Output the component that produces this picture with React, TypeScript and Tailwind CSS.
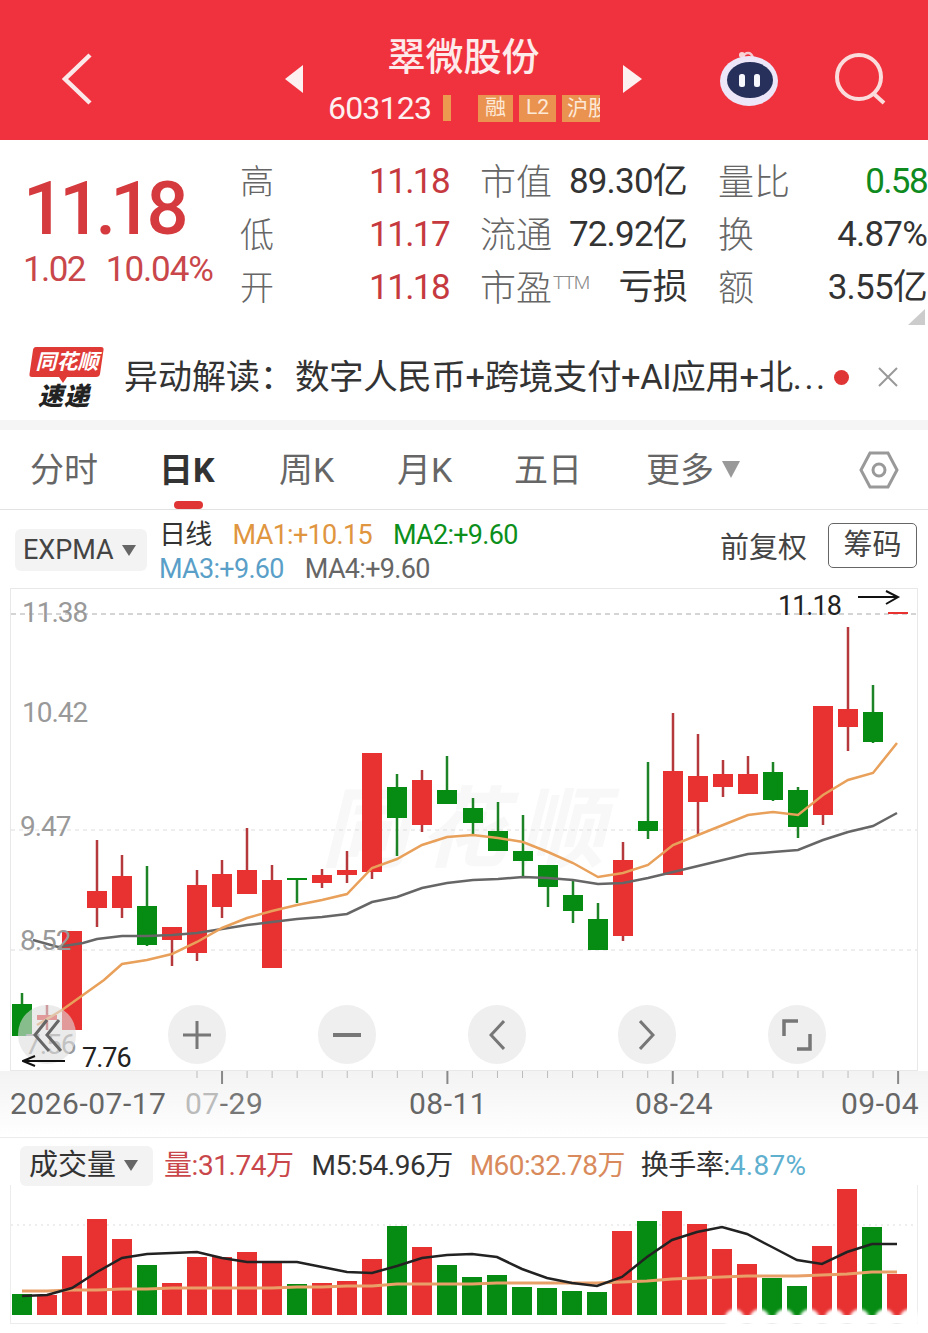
const candles = [
  // x, wick top, body top, body bottom, wick bottom, up
  [22, 993, 1004, 1036, 1036, 0],
  [47, 1005, 1015, 1020, 1030, 1],
  [72, 931, 931, 1030, 1030, 1],
  [97, 840, 891, 908, 927, 1],
  [122, 855, 876, 908, 918, 1],
  [147, 866, 906, 945, 946, 0],
  [172, 927, 927, 940, 966, 1],
  [197, 870, 885, 953, 961, 1],
  [222, 860, 874, 907, 918, 1],
  [247, 828, 870, 894, 894, 1],
  [272, 865, 880, 968, 968, 1],
  [297, 878, 878, 880, 903, 0],
  [322, 869, 875, 883, 888, 1],
  [347, 851, 870, 875, 883, 1],
  [372, 753, 753, 872, 879, 1],
  [397, 774, 787, 818, 856, 0],
  [422, 770, 780, 825, 832, 1],
  [447, 756, 790, 804, 804, 0],
  [473, 798, 808, 823, 835, 0],
  [498, 802, 831, 851, 851, 0],
  [523, 815, 851, 861, 877, 0],
  [548, 865, 865, 887, 907, 0],
  [573, 881, 895, 911, 923, 0],
  [598, 903, 919, 950, 950, 0],
  [623, 842, 860, 936, 941, 1],
  [648, 762, 821, 831, 839, 0],
  [673, 713, 771, 875, 875, 1],
  [698, 734, 776, 802, 835, 1],
  [723, 760, 774, 787, 797, 1],
  [748, 756, 774, 794, 794, 1],
  [773, 762, 772, 800, 801, 0],
  [798, 787, 790, 827, 838, 0],
  [823, 706, 706, 815, 825, 1],
  [848, 627, 709, 727, 751, 1],
  [873, 685, 712, 742, 743, 0],
  [898, 612, 612, 614, 614, 1],
];

const ma1 = '37,1025 62,1010 104,980 122,964 147,960 172,954 197,942 222,928 247,918 272,911 297,905 322,900 347,894 372,868 397,859 422,845 447,837 473,835 498,838 523,842 548,852 573,863 598,877 623,873 648,865 673,845 698,835 723,825 748,815 773,812 798,815 823,795 848,780 873,773 897,743';
const ma2 = '33,940 58,947 83,943 97,939 122,936 147,936 172,935 197,933 222,929 247,925 272,922 297,919 322,917 347,914 372,902 397,897 422,888 447,883 473,880 498,879 523,877 548,878 573,880 598,884 623,883 648,878 673,872 698,866 723,860 748,854 773,852 798,850 823,840 848,832 873,826 897,813';

const volumes = [
  [1294, 0], [1295, 1], [1256, 1], [1219, 1], [1239, 1], [1265, 0], [1283, 1], [1257, 1], [1257, 1],
  [1252, 1], [1262, 1], [1284, 0], [1283, 1], [1281, 1], [1259, 1], [1226, 0], [1247, 1], [1265, 0],
  [1277, 0], [1275, 0], [1287, 0], [1288, 0], [1291, 0], [1292, 0], [1231, 1], [1221, 0], [1211, 1],
  [1224, 1], [1249, 1], [1264, 1], [1278, 0], [1286, 0], [1246, 1], [1189, 1], [1227, 0], [1274, 1],
];
const m5 = [1296, 1295, 1288, 1272, 1258, 1254, 1253, 1252, 1258, 1262, 1262, 1262, 1267, 1272, 1273, 1266, 1258, 1255, 1254, 1257, 1269, 1278, 1283, 1286, 1277, 1257, 1240, 1232, 1227, 1234, 1247, 1260, 1264, 1252, 1244, 1244];
const m60 = [1291, 1291, 1290, 1290, 1289, 1289, 1288, 1288, 1288, 1288, 1288, 1287, 1287, 1286, 1286, 1284, 1284, 1284, 1284, 1283, 1283, 1283, 1283, 1283, 1282, 1281, 1279, 1278, 1277, 1276, 1276, 1276, 1275, 1274, 1272, 1272];

const linePoints = (ys: number[]) => ys.map((y, i) => `${22 + 25 * i},${y}`).join(' ');

const ticks = Array.from({ length: 29 }, (_, i) => 197 + 25.04 * i);

const statRows = [
  { l: '高', v: '11.18', l2: '市值', v2: '89.30亿', l3: '量比', v3: '0.58', c3: 'text-[#0e8a1e] tracking-[-1.6px]' },
  { l: '低', v: '11.17', l2: '流通', v2: '72.92亿', l3: '换', v3: '4.87%', c3: 'text-[#333] tracking-[-0.8px]' },
  { l: '开', v: '11.18', l2: '市盈', v2: '亏损', l3: '额', v3: '3.55亿', c3: 'text-[#333] tracking-[-0.8px]' },
];

const fontClass = "font-['Roboto','Noto_Sans_CJK_SC',sans-serif]";
const axisLabel = 'absolute text-[28px] leading-[36px] tracking-[-1px] text-[#999]';

function Robot() {
  return (
    <svg width="60" height="58" viewBox="0 0 60 58">
      <path d="M24 8 C26 3 32 2 34 9" fill="none" stroke="#f6c9cf" strokeWidth="2.5" />
      <circle cx="23" cy="6" r="3" fill="#f9d5d8" />
      <ellipse cx="30" cy="32" rx="29" ry="25" fill="#ece6f8" />
      <ellipse cx="31" cy="31" rx="23" ry="18" fill="#27305a" />
      <rect x="20" y="25" width="6" height="13" rx="2.5" fill="#f7f7ff" />
      <rect x="35" y="25" width="6" height="13" rx="2.5" fill="#f7f7ff" />
    </svg>
  );
}

function Logo() {
  return (
    <div className="flex w-[76px] flex-col items-center">
      <div className="relative flex h-[36px] w-[76px] items-center justify-center">
        <svg className="absolute inset-0" width="76" height="40" viewBox="0 0 76 40">
          <path d="M7 1 H72 Q75 1 74.5 4 L71 28 Q70.5 31 67 31 H38 L34 37 L30 31 H3 Q0 31 0.5 28 L4 4 Q4.5 1 7 1 Z" fill="#e03a36" />
        </svg>
        <span className="relative -mt-1 text-[21px] leading-none font-bold italic text-white">同花顺</span>
      </div>
      <span className="mt-[2px] -ml-[6px] text-[25px] leading-none font-black italic tracking-[1px] text-[#222]">速递</span>
    </div>
  );
}

function RoundBtn({ children, bg = 'bg-[#efefef]' }: { children: React.ReactNode; bg?: string }) {
  return (
    <div className={`flex h-[59px] w-[58px] items-center justify-center rounded-full ${bg}`}>
      {children}
    </div>
  );
}

function CandleChart() {
  return (
    <svg className="absolute -top-px -left-px" width="908" height="483" viewBox="10 588 908 483">
      <line x1="11" x2="917" y1="614" y2="614" stroke="#aaa" strokeDasharray="5 4" />
      <line x1="11" x2="917" y1="830" y2="830" stroke="#ddd" strokeDasharray="4 4" />
      <line x1="11" x2="917" y1="950" y2="950" stroke="#ddd" strokeDasharray="4 4" />
      {candles.map(([x, wt, bt, bb, wb, up]) => (
        <g key={x}>
          <line x1={x} x2={x} y1={wt} y2={wb} stroke={up ? '#b5383c' : '#1c8426'} strokeWidth="2.5" />
          <rect x={x - 10} y={bt} width="20" height={bb - bt} fill={up ? '#e83232' : '#068c12'} />
        </g>
      ))}
      <polyline points={ma2} fill="none" stroke="#666" strokeWidth="2.5" />
      <polyline points={ma1} fill="none" stroke="#e8a05a" strokeWidth="2.5" />
      <path d="M858 597 H897 M886 591 L898 597 L886 604" fill="none" stroke="#111" strokeWidth="2" />
    </svg>
  );
}

function VolumeChart() {
  return (
    <svg className="absolute top-0 -left-px" width="908" height="139" viewBox="10 1185 908 139">
      <line x1="11" x2="917" y1="1225" y2="1225" stroke="#ddd" strokeDasharray="2 4" />
      {volumes.map(([top, up], i) => (
        <rect key={i} x={12 + 25 * i} y={top} width="20" height={1315 - top} fill={up ? '#e83232' : '#068c12'} />
      ))}
      <polyline points={linePoints(m60)} fill="none" stroke="#e8a068" strokeWidth="3" />
      <polyline points={linePoints(m5)} fill="none" stroke="#222" strokeWidth="2.5" />
      {/* blurred watermark eats the bar bottoms */}
      <g className="blur-[1.5px]">
        {[734.5, 759.5, 784.5, 809.5, 834.5, 859.5, 884.5, 909.5].map(x => (
          <ellipse key={x} cx={x} cy="1319" rx="10" ry="10" fill="#fff" />
        ))}
      </g>
    </svg>
  );
}

export default function App() {
  return (
    <div className={`flex h-[1333px] w-[928px] flex-col overflow-hidden bg-white ${fontClass}`}>
      {/* top bar */}
      <div className="flex h-[140px] shrink-0 items-center bg-[#f0323e] pt-[18px] pl-[62px]">
        <svg width="30" height="52" viewBox="0 0 30 52">
          <path d="M28 2 L3 26 L28 50" fill="none" stroke="#fbe9e9" strokeWidth="4.5" />
        </svg>
        <svg className="ml-[193px]" width="18" height="28" viewBox="0 0 18 28">
          <path d="M18 0 V28 L0 14 Z" fill="#fdf0f0" />
        </svg>
        <div className="ml-[27px] flex w-[270px] flex-col">
          <div className="-ml-[3px] text-center text-[38px] leading-[42px] font-medium text-[#fdeaea]">翠微股份</div>
          <div className="mt-[16px] -ml-[2px] flex h-[28px] items-center">
            <span className="text-[32px] leading-none tracking-[-0.8px] text-[#fdf0f0]">603123</span>
            <span className="ml-[12px] h-[26px] w-[8px] bg-[#ec9a50]" />
            <span className="ml-[27px] flex h-[27px] w-[35px] items-center justify-center bg-[#ea9350] text-[21px] text-[#fde9d8]">融</span>
            <span className="ml-[6px] flex h-[27px] w-[37px] items-center justify-center bg-[#ea9350] text-[21px] text-[#fde9d8]">L2</span>
            <span className="ml-[6px] flex h-[27px] w-[38px] items-center overflow-hidden whitespace-nowrap bg-[#ea9350] pl-[5px] text-[21px] leading-[27px] text-[#fde9d8]">沪股</span>
          </div>
        </div>
        <svg className="ml-[23px]" width="19" height="28" viewBox="0 0 19 28">
          <path d="M0 0 V28 L19 14 Z" fill="#fdf0f0" />
        </svg>
        <div className="ml-[77px] -mt-[3px]"><Robot /></div>
        <svg className="ml-[56px]" width="52" height="52" viewBox="0 0 52 52">
          <circle cx="24" cy="24" r="22" fill="none" stroke="#fbdcdc" strokeWidth="4" />
          <path d="M39 41 L49 50" stroke="#fbdcdc" strokeWidth="4" />
        </svg>
      </div>

      {/* quote */}
      <div className="relative flex h-[195px] shrink-0 pt-[16px]">
        <div className="flex w-[240px] shrink-0 flex-col pl-[23px]">
          <div className="mt-[16px] text-[74px] leading-[74px] font-medium tracking-[-5.8px] text-[#d43a3e]">11.18</div>
          <div className="mt-[3px] flex text-[35px] leading-[42px] tracking-[-1.1px] text-[#c9474a]">
            <span className="tracking-[-1.6px]">1.02</span>
            <span className="ml-[21px]">10.04%</span>
          </div>
        </div>
        <div className="grid w-[688px] grid-cols-[209px_207px_209px] content-start gap-x-[31px]">
          {statRows.map(r => (
            <div key={r.l} className="contents">
              <div className="flex h-[53px] items-center justify-between">
                <span className="text-[34px] font-light text-[#666]">{r.l}</span>
                <span className="text-[35px] tracking-[-1.6px] text-[#c5393f]">{r.v}</span>
              </div>
              <div className="flex h-[53px] items-center justify-between">
                <span className="relative text-[36px] font-light whitespace-nowrap text-[#666]">
                  {r.l2}
                  {r.l2 === '市盈' && <span className="absolute top-[7px] left-[73px] text-[19px] font-light tracking-[-1px] text-[#888]">TTM</span>}
                </span>
                <span className="text-[35px] tracking-[-0.8px] text-[#333]">{r.v2}</span>
              </div>
              <div className="flex h-[53px] items-center justify-between">
                <span className="text-[36px] font-light text-[#666]">{r.l3}</span>
                <span className={`text-[35px] ${r.c3}`}>{r.v3}</span>
              </div>
            </div>
          ))}
        </div>
        <svg className="absolute right-[3px] bottom-[10px]" width="17" height="16" viewBox="0 0 17 16">
          <path d="M17 0 V16 H0 Z" fill="#ccc" />
        </svg>
      </div>

      {/* ticker */}
      <div className="flex h-[85px] shrink-0 items-center pl-[29px]">
        <Logo />
        <span className="ml-[19px] w-[171px] text-[34px] whitespace-nowrap text-[#333]">异动解读：</span>
        <span className="w-[537px] text-[34.5px] tracking-[-0.4px] whitespace-nowrap text-[#333]">数字人民币+跨境支付+AI应用+北<span className="tracking-[2.5px]">...</span></span>
        <span className="ml-[2px] h-[15px] w-[15px] rounded-full bg-[#e03535]" />
        <svg className="ml-[28px] -mt-[2px]" width="22" height="22" viewBox="0 0 22 22">
          <path d="M2 2 L20 20 M20 2 L2 20" stroke="#999" strokeWidth="2" />
        </svg>
      </div>
      <div className="h-[10px] shrink-0 bg-[#f5f5f5]" />

      {/* period tabs */}
      <div className="relative flex h-[80px] shrink-0 items-center border-b border-[#e2e2e2] pl-[30px] text-[34px] text-[#666]">
        <span className="w-[132px] pt-[2px]">分时</span>
        <span className="w-[117px] -ml-[3px] pl-[0px] pt-[2px] font-bold text-[#333]">日K</span>
        <span className="w-[118px] ml-[3px] pt-[2px]">周K</span>
        <span className="w-[117px] pt-[2px]">月K</span>
        <span className="w-[132px] pt-[2px]">五日</span>
        <span className="pt-[2px]">更多</span>
        <svg className="ml-[8px]" width="18" height="17" viewBox="0 0 18 17">
          <path d="M0 0 H18 L9 17 Z" fill="#999" />
        </svg>
        <svg className="ml-auto mr-[29px]" width="40" height="40" viewBox="0 0 40 40">
          <path d="M11 3 H29 L38 20 L29 37 H11 L2 20 Z" fill="none" stroke="#999" strokeWidth="3" />
          <circle cx="20" cy="20" r="6" fill="none" stroke="#999" strokeWidth="3" />
        </svg>
        <span className="absolute bottom-0 left-[174px] h-[8px] w-[29px] rounded-full bg-[#e03535]" />
      </div>

      {/* indicator row */}
      <div className="flex h-[78px] shrink-0 items-center pl-[15px]">
        <div className="mt-[2px] flex h-[42px] w-[132px] items-center rounded-md bg-[#f3f3f3] pl-[8px] text-[27px] text-[#444]">
          EXPMA
          <svg className="ml-[8px]" width="14" height="11" viewBox="0 0 14 11"><path d="M0 0 H14 L7 11 Z" fill="#666" /></svg>
        </div>
        <div className="ml-[12px] flex flex-col pt-[6px] text-[27px] leading-[34px] tracking-[-0.7px]">
          <div className="flex whitespace-nowrap">
            <span className="text-[#333]">日线</span>
            <span className="ml-[21px] text-[#e0953f]">MA1:+10.15</span>
            <span className="ml-[21px] text-[#0c8f1b]">MA2:+9.60</span>
          </div>
          <div className="flex whitespace-nowrap">
            <span className="text-[#5a9fc8]">MA3:+9.60</span>
            <span className="ml-[21px] text-[#666]">MA4:+9.60</span>
          </div>
        </div>
        <span className="ml-auto text-[29px] text-[#444]">前复权</span>
        <span className="mr-[11px] ml-[21px] -mt-[7px] flex h-[45px] w-[89px] items-center justify-center rounded-[5px] border border-[#666] text-[29px] text-[#444]">筹码</span>
      </div>

      {/* candles */}
      <div className="relative mx-[10px] h-[483px] w-[908px] shrink-0 border border-[#e8e8e8]">
        <div className="absolute top-[197px] left-[310px] text-[88px] leading-none font-bold italic tracking-[10px] text-[#f8f8f8]">同花顺</div>
        <CandleChart />
        <span className={`${axisLabel} top-[6px] left-[11px]`}>11.38</span>
        <span className={`${axisLabel} top-[106px] left-[11px]`}>10.42</span>
        <span className={`${axisLabel} top-[220px] left-[9px]`}>9.47</span>
        <span className={`${axisLabel} top-[334px] left-[9px]`}>8.52</span>
        <span className={`${axisLabel} top-[438px] left-[14px]`}>7.56</span>
        <span className="absolute top-[-1px] left-[767px] text-[27px] leading-[36px] tracking-[-1px] text-[#222]">11.18</span>
        <span className="absolute top-[451px] left-[71px] text-[27px] leading-[36px] tracking-[-1px] text-[#222]">7.76</span>
        <div className="absolute top-[416px] left-[7px] flex">
          <RoundBtn bg="bg-[#dddddd]/60">
            <svg width="30" height="36" viewBox="0 0 30 36"><path d="M15 3 L3 18 L17 34 M27 3 L15 18 L29 34" fill="none" stroke="#666" strokeWidth="3" /></svg>
          </RoundBtn>
          <div className="ml-[92px] flex gap-x-[92px]">
            <RoundBtn>
              <svg width="30" height="30" viewBox="0 0 30 30"><path d="M15 1 V29 M1 15 H29" stroke="#777" strokeWidth="3" /></svg>
            </RoundBtn>
            <RoundBtn>
              <svg width="30" height="6" viewBox="0 0 30 6"><path d="M1 3 H29" stroke="#777" strokeWidth="4" /></svg>
            </RoundBtn>
            <RoundBtn>
              <svg width="16" height="30" viewBox="0 0 16 30"><path d="M15 1 L2 15 L15 29" fill="none" stroke="#777" strokeWidth="3" /></svg>
            </RoundBtn>
            <RoundBtn>
              <svg width="16" height="30" viewBox="0 0 16 30"><path d="M1 1 L14 15 L1 29" fill="none" stroke="#777" strokeWidth="3" /></svg>
            </RoundBtn>
            <RoundBtn>
              <svg width="32" height="32" viewBox="0 0 32 32"><path d="M17 2 H3 V17 M29 15 V30 H16" fill="none" stroke="#777" strokeWidth="3.5" /></svg>
            </RoundBtn>
          </div>
        </div>
        <svg className="absolute top-[465px] left-[11px]" width="44" height="14" viewBox="0 0 44 14">
          <path d="M43 7 H2 M13 2 L1 7 L13 12" fill="none" stroke="#111" strokeWidth="2" />
        </svg>
      </div>

      {/* date axis */}
      <div className="relative h-[66px] shrink-0 bg-linear-to-b from-[#f3f3f3] to-white">
        <svg className="absolute inset-0" width="928" height="14" viewBox="0 0 928 14">
          {ticks.map((x, i) => {
            const major = i % 9 === 1;
            return <line key={i} x1={x} x2={x} y1="0" y2={major ? 13 : 7} stroke={major ? '#888' : '#bbb'} strokeWidth={major ? 2 : 1} />;
          })}
        </svg>
        <div className="flex h-full items-start pt-[14px] pl-[10px] text-[30px] leading-[38px] tracking-[0.5px] text-[#666]">
          <span className="w-[175px]">2026-07-17</span>
          <span className="w-[224px] text-[#777]"><span className="text-[#bbb]">07</span>-29</span>
          <span className="w-[226px]">08-11</span>
          <span className="w-[206px]">08-24</span>
          <span>09-04</span>
        </div>
      </div>

      {/* volume */}
      <div className="flex h-[48px] shrink-0 items-center border-t border-[#ececec] pt-[8px] pl-[20px] text-[28px] tracking-[-0.45px]">
        <div className="flex h-[40px] w-[133px] items-center rounded-md bg-[#f3f3f3] pl-[9px] text-[29px] tracking-normal text-[#333]">
          成交量
          <svg className="ml-[8px]" width="14" height="11" viewBox="0 0 14 11"><path d="M0 0 H14 L7 11 Z" fill="#666" /></svg>
        </div>
        <span className="ml-[11px] text-[#c9474a]">量:31.74万</span>
        <span className="ml-[18px] text-[#333]">M5:54.96万</span>
        <span className="ml-[17px] tracking-[-0.6px] text-[#d98a5c]">M60:32.78万</span>
        <span className="ml-[16px] text-[#333]">换手率:</span>
        <span className="tracking-[0.3px] text-[#5fb0cf]">4.87%</span>
      </div>
      <div className="relative mx-[10px] h-[139px] w-[908px] shrink-0 border-x border-b border-[#ececec]">
        <VolumeChart />
      </div>
    </div>
  );
}
